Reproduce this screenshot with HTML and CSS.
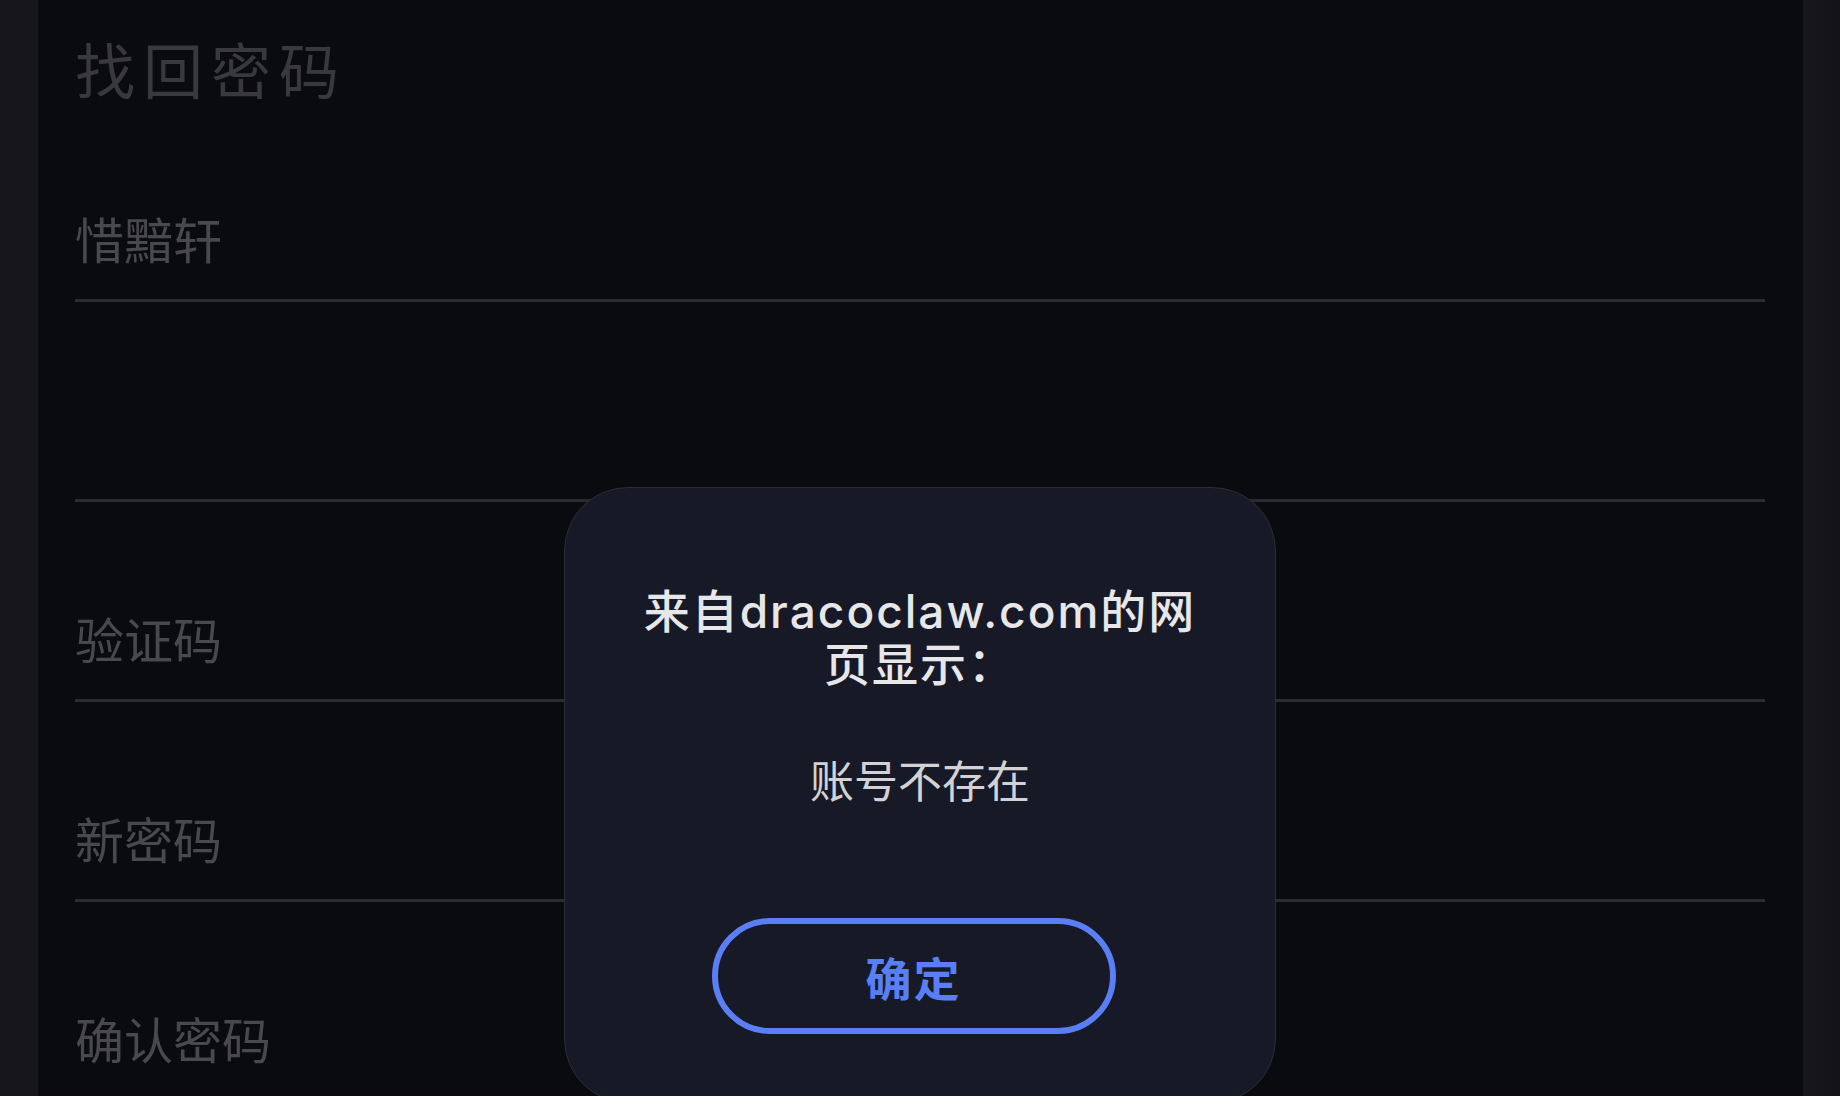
FILE: index.html
```html
<!DOCTYPE html>
<html lang="zh-CN">
<head>
<meta charset="utf-8">
<title>找回密码</title>
<link rel="stylesheet" href="styles.css">
</head>
<body>
<div class="frame">
  <div class="side side-left"></div>
  <main class="panel">
    <h1 class="title">找回密码</h1>
    <div class="field"><span class="value">惜黯轩</span></div>
    <div class="field"><span class="value"></span></div>
    <div class="field"><span class="placeholder">验证码</span></div>
    <div class="field"><span class="placeholder">新密码</span></div>
    <div class="field"><span class="placeholder">确认密码</span></div>
  </main>
  <div class="side side-right"></div>
</div>
<div class="overlay">
  <div class="dialog">
    <div class="dialog-title">来自dracoclaw.com的网页显示：</div>
    <div class="dialog-message">账号不存在</div>
    <button class="dialog-button">确定</button>
  </div>
</div>
</body>
</html>
```
FILE: styles.css
```css
html, body {
  margin: 0;
  padding: 0;
  width: 1840px;
  height: 1096px;
  overflow: hidden;
  background: #0a0b0f;
  font-family: Inter, "Noto Sans CJK SC", sans-serif;
}

.frame {
  display: flex;
  width: 1840px;
  height: 1096px;
}

.side {
  background: #17171b;
}

.side-left {
  width: 38px;
}

.side-right {
  width: 37px;
  background: linear-gradient(90deg, #18181c, #141418);
}

.panel {
  flex: 1;
  background: #0a0b0f;
  padding: 38px 38px 0 37px;
  box-sizing: border-box;
}

.title {
  margin: 0 0 4px 0;
  height: 60px;
  line-height: 60px;
  font-size: 60px;
  font-weight: 400;
  letter-spacing: 8px;
  color: #38383d;
  font-family: "Noto Sans CJK SC", sans-serif;
}

.field {
  height: 200px;
  box-sizing: border-box;
  border-bottom: 3px solid #2b2c31;
  display: flex;
  align-items: flex-end;
  padding-bottom: 37px;
}

.value,
.placeholder {
  font-family: "Noto Sans CJK SC", sans-serif;
  font-size: 49px;
  line-height: 49px;
  color: #48484d;
}

.overlay {
  position: absolute;
  inset: 0;
  display: flex;
  justify-content: center;
  align-items: flex-start;
  pointer-events: none;
}

.dialog {
  margin-top: 487px;
  width: 712px;
  height: 616px;
  box-sizing: border-box;
  background: #171a26;
  border: 1.5px solid #2a2d38;
  border-radius: 64px;
  padding: 97px 76px 0;
  display: flex;
  flex-direction: column;
  align-items: center;
}

.dialog-title {
  font-size: 46px;
  line-height: 53px;
  font-weight: 500;
  letter-spacing: 2px;
  color: #e7e7ea;
  text-align: center;
}

.dialog-message {
  margin-top: 66px;
  font-size: 44px;
  line-height: 44px;
  color: #d2d2d5;
  font-family: "Noto Sans CJK SC", sans-serif;
}

.dialog-button {
  margin-top: 117px;
  margin-right: 13px;
  width: 404px;
  height: 116px;
  flex-shrink: 0;
  box-sizing: border-box;
  border: 6px solid #5a7ef6;
  border-radius: 58px;
  background: transparent;
  color: #5a7ef6;
  font-family: "Noto Sans CJK SC", sans-serif;
  font-size: 46px;
  font-weight: 700;
  letter-spacing: 2px;
  padding: 0;
}
```
